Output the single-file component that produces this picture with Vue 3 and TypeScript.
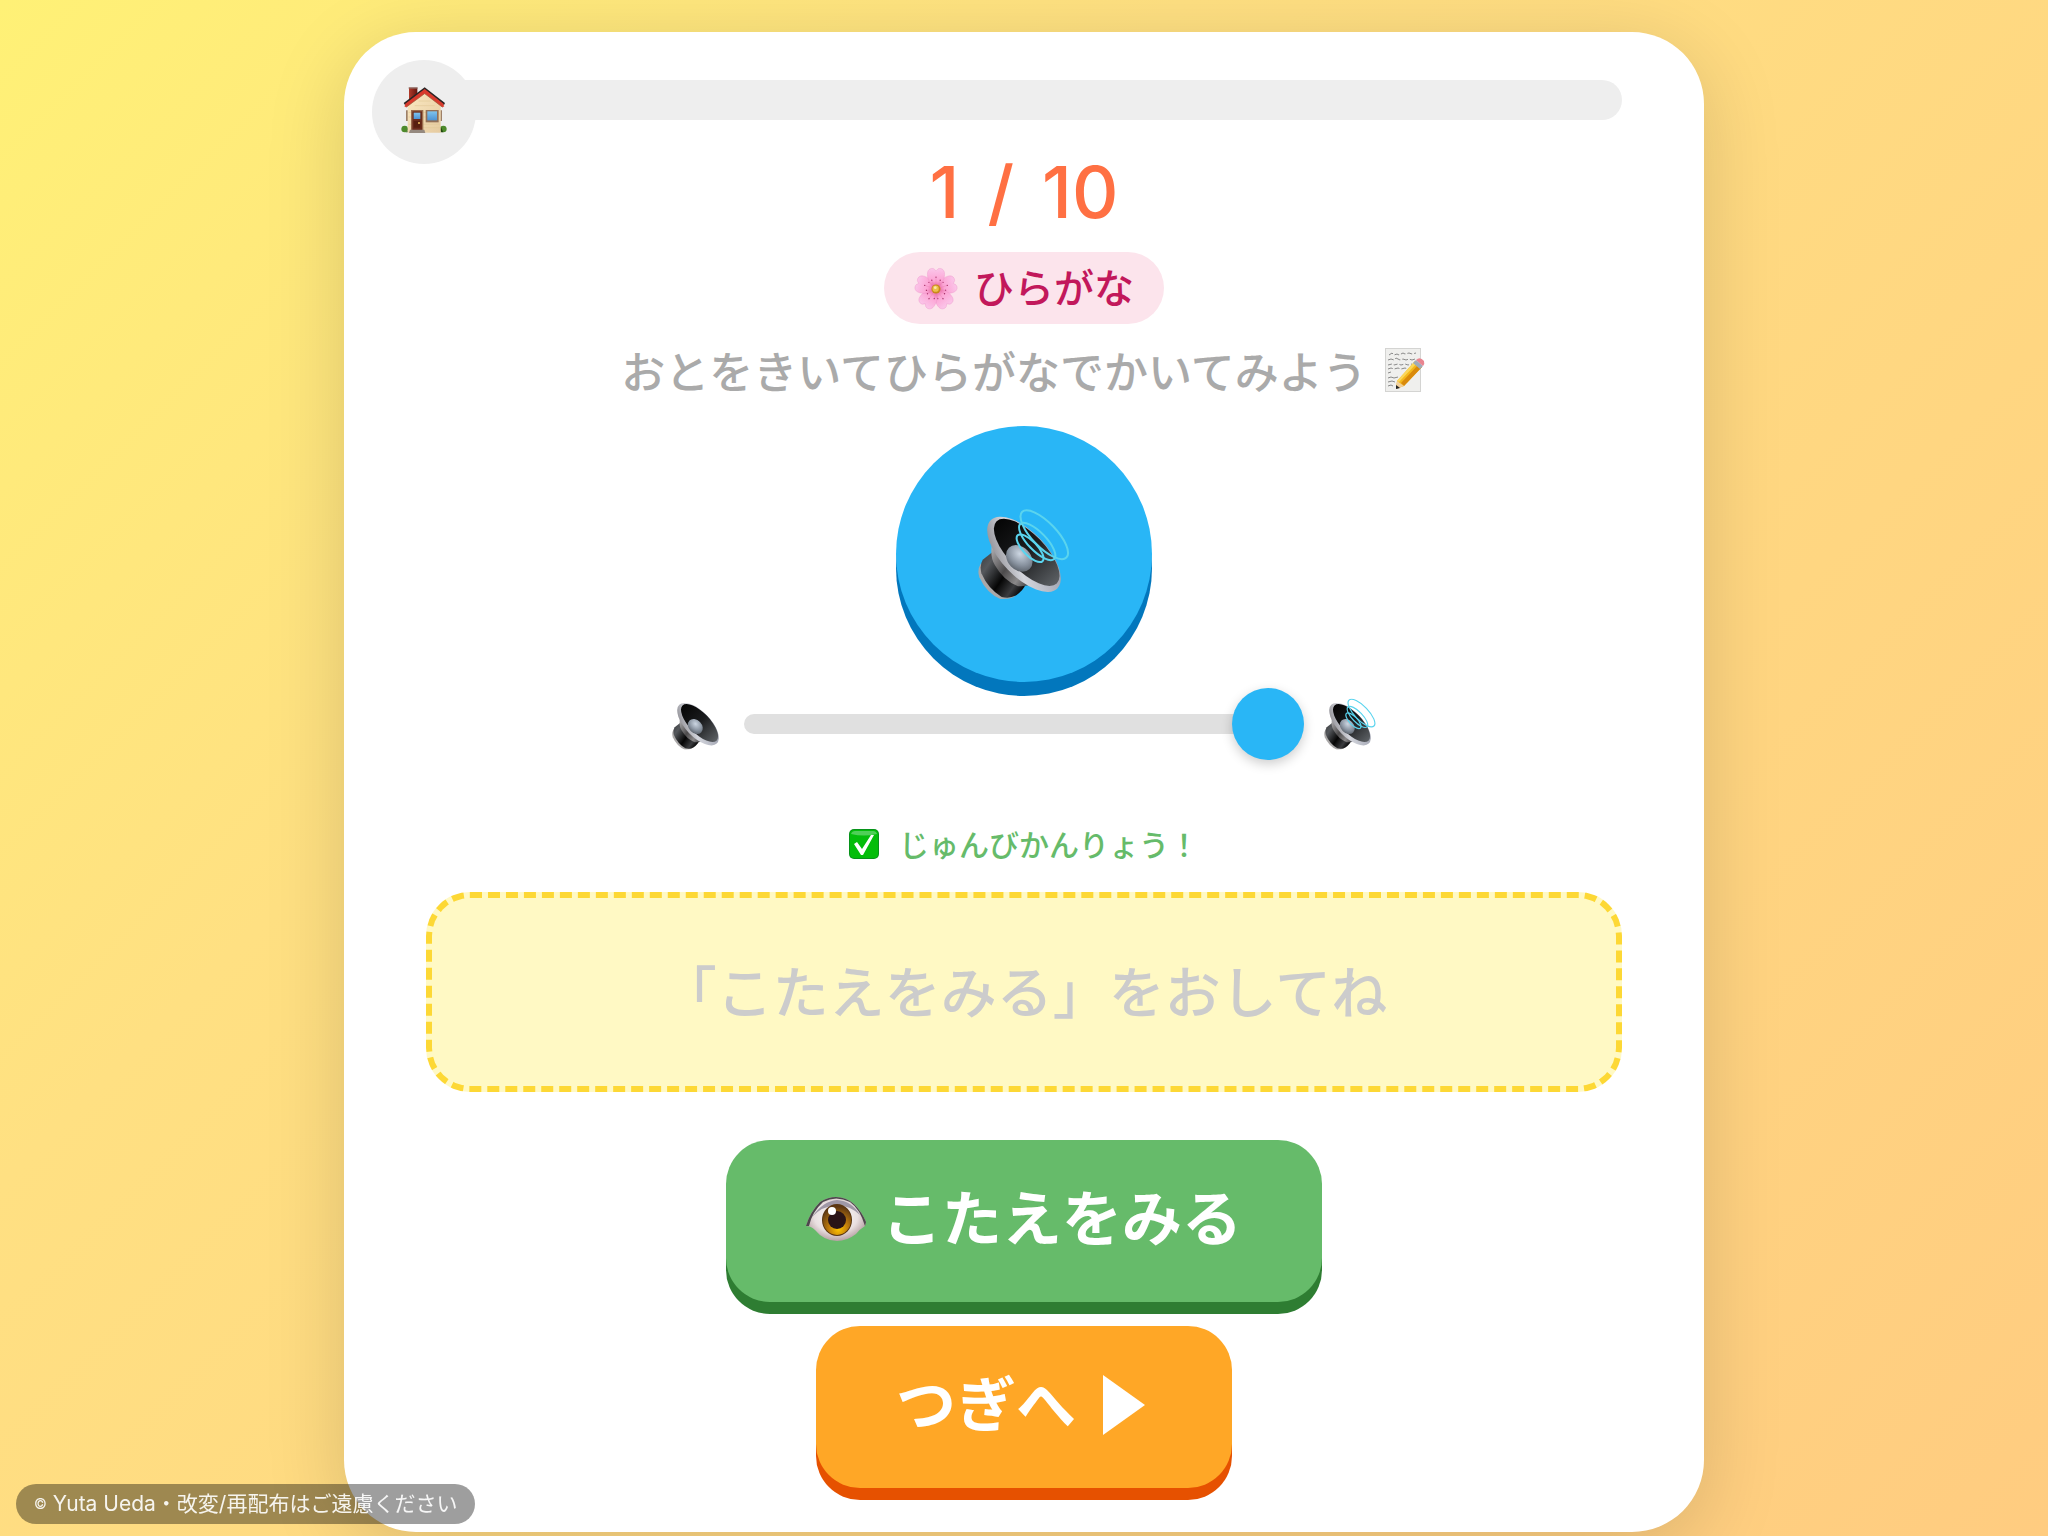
<script setup lang="ts">
import { computed, ref } from 'vue'

const total = 10
const current = ref(1)
const volume = ref(100)
const revealed = ref(false)
const answer = ref('さくら')

const answerText = computed(() => (revealed.value ? answer.value : '「こたえをみる」をおしてね'))
const progress = computed(() => `${((current.value - 1) / total) * 100}%`)

function next(): void {
  if (current.value < total) current.value += 1
  revealed.value = false
}
</script>

<template>
  <div class="page">
    <!-- Shared drawing definitions for the speaker icons -->
    <svg class="defs" aria-hidden="true">
      <defs>
        <linearGradient id="rim" x1="0" y1="1" x2="1" y2="0">
          <stop offset="0" stop-color="#77757a" />
          <stop offset="0.4" stop-color="#d3d5dc" />
          <stop offset="1" stop-color="#8f93a3" />
        </linearGradient>
        <linearGradient id="bowl" x1="0" y1="0" x2="1" y2="0">
          <stop offset="0" stop-color="#050505" />
          <stop offset="0.5" stop-color="#1b1c1e" />
          <stop offset="1" stop-color="#5c6064" />
        </linearGradient>
        <linearGradient id="base" x1="0" y1="0" x2="1" y2="0.7">
          <stop offset="0" stop-color="#3a3c3f" />
          <stop offset="0.25" stop-color="#55585c" />
          <stop offset="0.6" stop-color="#050505" />
          <stop offset="0.85" stop-color="#3a3b3e" />
          <stop offset="1" stop-color="#0c0c0d" />
        </linearGradient>
        <linearGradient id="neck" x1="0" y1="0" x2="1" y2="0.7">
          <stop offset="0" stop-color="#b9b8ba" />
          <stop offset="0.5" stop-color="#4c4a4b" />
          <stop offset="0.8" stop-color="#8a8889" />
          <stop offset="1" stop-color="#4b4b4e" />
        </linearGradient>
        <radialGradient id="dome" cx="0.4" cy="0.35" r="0.7">
          <stop offset="0" stop-color="#ccd6e2" />
          <stop offset="0.6" stop-color="#8a94a1" />
          <stop offset="1" stop-color="#5b626b" />
        </radialGradient>
        <symbol id="speaker" viewBox="0 0 272 270">
          <path d="M8 164 Q-3 182 4 204 Q26 252 66 268 Q90 270 106 262 L122 240 L30 160Z" fill="#aaa8a8" />
          <path d="M44 128 L14 152 Q4 168 10 192 Q30 238 70 262 Q92 268 112 258 Q136 240 140 226Z" fill="url(#base)" />
          <path d="M42 104 Q34 142 50 168 Q76 214 118 230 Q142 232 168 224Z" fill="url(#neck)" />
          <ellipse cx="136" cy="136" rx="141" ry="66" transform="rotate(46 136 136)" fill="url(#rim)" />
          <ellipse cx="144" cy="130" rx="128" ry="54" transform="rotate(46 144 130)" fill="url(#bowl)" />
          <ellipse cx="122" cy="148" rx="44" ry="34" transform="rotate(46 122 148)" fill="url(#dome)" />
        </symbol>
        <symbol id="waves" viewBox="0 0 272 270">
          <g fill="none" stroke="#5ad4ee" stroke-width="6">
            <ellipse cx="196" cy="78" rx="94" ry="36" transform="rotate(46 196 78)" />
            <ellipse cx="175" cy="98" rx="72" ry="27" transform="rotate(46 175 98)" />
            <ellipse cx="154" cy="118" rx="53" ry="21" transform="rotate(46 154 118)" />
          </g>
        </symbol>
      </defs>
    </svg>

    <main class="card">
      <button class="home" type="button" aria-label="ホーム">
        <svg viewBox="0 0 136 138" aria-hidden="true">
          <defs>
            <linearGradient id="wall" x1="0" y1="0" x2="1" y2="1">
              <stop offset="0" stop-color="#fbe9c2" />
              <stop offset="1" stop-color="#e6cba0" />
            </linearGradient>
            <linearGradient id="pane" x1="0" y1="0" x2="0" y2="1">
              <stop offset="0" stop-color="#7fc4ee" />
              <stop offset="1" stop-color="#4d93d4" />
            </linearGradient>
            <linearGradient id="chimney" x1="0" y1="0" x2="1" y2="0">
              <stop offset="0" stop-color="#b23a2a" />
              <stop offset="1" stop-color="#64150f" />
            </linearGradient>
          </defs>
          <path d="M23 2H48V28L23 46Z" fill="url(#chimney)" />
          <path d="M22 1H49V5H22Z" fill="#8c6a62" />
          <circle cx="10" cy="126" r="10" fill="#4d8a2c" />
          <circle cx="126" cy="126" r="10" fill="#4d8a2c" />
          <path d="M12 136A10 10 0 0 0 19 122V136ZM118 118V136H126Z" fill="#22480f" />
          <path d="M14 70H20V102H14ZM117 70H122V102H117Z" fill="#9d8068" />
          <path d="M19 50L70 12L118 50V137H19Z" fill="url(#wall)" />
          <path d="M22 76H30M66 76H74M22 90H30M66 90H74M22 112H30M66 112H116M66 122H116M40 56H100M52 42H88" stroke="#e3c998" stroke-width="2" />
          <path d="M70 11L125 52L129 58L124 61L70 20L14 61L9 58L13 52Z" fill="#df4030" />
          <path d="M70 1L131 48L128 54L70 9L11 54L7 48Z" fill="#2b2424" />
          <path d="M70 6L127 51L122 60L70 19L16 60L11 51Z" fill="#d93a2d" />
          <path d="M14 61L70 20L124 61" fill="none" stroke="#9b6d4a" stroke-width="2" />
          <path d="M29 69H66V130H29Z" fill="#9a6d4e" />
          <path d="M33 73H62V129H33Z" fill="#6b2c1b" />
          <path d="M37 77H57V96H37Z" fill="url(#pane)" />
          <path d="M37 102H57V122H37Z" fill="#57200f" />
          <circle cx="53" cy="108" r="3" fill="#f0c060" />
          <path d="M73 69H112V106H73Z" fill="#927058" />
          <path d="M78 73H107V100H78Z" fill="url(#pane)" />
          <path d="M26 128H69L72 138H23Z" fill="#95897f" />
        </svg>
      </button>

      <div class="progress" role="progressbar" :aria-valuenow="current" aria-valuemin="1" :aria-valuemax="total">
        <div class="progress-fill" :style="{ width: progress }"></div>
      </div>

      <p class="counter">
        <span>{{ current }}</span>
        <span>/</span>
        <span>{{ total }}</span>
      </p>

      <div class="badge">
        <svg class="flower" viewBox="0 0 126 126" aria-hidden="true">
          <defs>
            <linearGradient id="petal" x1="0" y1="0" x2="0" y2="1">
              <stop offset="0" stop-color="#fbc6ea" />
              <stop offset="0.6" stop-color="#fca4d4" />
              <stop offset="1" stop-color="#e0508f" />
            </linearGradient>
          </defs>
          <g v-for="n in 5" :key="n" :transform="`rotate(${n * 72} 63 66)`">
            <path
              d="M63 66C46 56 36 34 39 18C41 9 49 5 57 8L63 14L69 8C77 5 85 9 87 18C90 34 80 56 63 66Z"
              fill="url(#petal)"
              stroke="#e98fc4"
              stroke-width="1"
            />
            <path d="M63 60V34M58 58L51 42M68 58L75 42" stroke="#e77fb2" stroke-width="1" />
            <circle cx="63" cy="32" r="2" fill="#a8346a" />
            <circle cx="51" cy="41" r="2" fill="#a8346a" />
            <circle cx="75" cy="41" r="2" fill="#a8346a" />
          </g>
          <circle cx="63" cy="66" r="13" fill="#c9891c" />
          <circle cx="62" cy="65" r="9" fill="#edc04a" />
          <circle cx="61" cy="62" r="4" fill="#fbe9a4" />
        </svg>
        <span>ひらがな</span>
      </div>

      <p class="instruction">
        <span>おとをきいてひらがなでかいてみよう</span>
        <svg class="memo" viewBox="0 0 44 44" aria-hidden="true">
          <path d="M2 0H38V44H2Z" fill="#d4d4d2" />
          <path d="M3 1H37V43H3Z" fill="#efefed" />
          <g fill="none" stroke="#8a8a8a" stroke-width="1">
            <path d="M6 7l3-2 2 2 3-1 2 1 4-2 2 1 4-1 3 1 4-1" stroke-dasharray="5 2" />
            <path d="M5 12l3-1 3 1 2-2 4 2 3-1 3 1 3-1 3 1 3-1" stroke-dasharray="6 2" />
            <path d="M5 17l4-1 2 1 4-1 3 1 4-1 3 1 4-1" stroke-dasharray="4 2" />
            <path d="M5 21l3-1 3 1 4-1 3 1 4-1 3 1" stroke-dasharray="5 2" />
            <path d="M5 25l3-1M5 30l3-1 3 1 4-1M5 34l4-1 3 1M5 38l3-1 2 1" />
          </g>
          <path d="M13 41L14 33L32 13L39 19L21 38Z" fill="#f4b81c" />
          <path d="M18 35L36 16L39 19L21 38Z" fill="#d98a0b" />
          <path d="M14 33L32 13L34 15L16 34Z" fill="#fbd75a" />
          <path d="M13 41L14 33L21 38Z" fill="#f1cf9a" />
          <path d="M13 41L13 37L17 40Z" fill="#222" />
          <path d="M30 15L33 12L40 18L37 21Z" fill="#9eabba" />
          <path d="M33 12Q37 8 41 13Q42 16 40 18Z" fill="#e98590" />
        </svg>
      </p>

      <button class="play" type="button" aria-label="おとをきく">
        <svg viewBox="0 0 272 270" aria-hidden="true">
          <use href="#speaker" />
          <use href="#waves" />
        </svg>
      </button>

      <div class="volume">
        <svg viewBox="0 0 272 270" aria-hidden="true"><use href="#speaker" /></svg>
        <input v-model.number="volume" type="range" min="0" max="100" aria-label="おんりょう" />
        <svg viewBox="0 0 272 270" aria-hidden="true">
          <use href="#speaker" />
          <use href="#waves" />
        </svg>
      </div>

      <p class="status">
        <svg viewBox="0 0 30 30" aria-hidden="true">
          <rect width="30" height="30" rx="5" fill="#07931a" />
          <rect x="1" y="1" width="28" height="28" rx="4" fill="#04bd0b" />
          <path d="M2 5Q3 2 6 2H24Q27 2 28 5Q15 8 2 5Z" fill="#4fcf58" />
          <path d="M5 15L8 13L13 20L22 6H25L14 26H12Z" fill="#fff" />
        </svg>
        <span>じゅんびかんりょう！</span>
      </p>

      <div class="answer" aria-live="polite">{{ answerText }}</div>

      <button class="action reveal" type="button" @click="revealed = true">
        <svg class="glyph" viewBox="0 0 60 60" aria-hidden="true">
          <defs>
            <radialGradient id="white" cx="0.5" cy="0.45" r="0.6">
              <stop offset="0" stop-color="#ffffff" />
              <stop offset="0.6" stop-color="#e9dfe0" />
              <stop offset="1" stop-color="#a88f92" />
            </radialGradient>
            <radialGradient id="iris" cx="0.55" cy="0.8" r="0.75">
              <stop offset="0" stop-color="#ffc400" />
              <stop offset="0.45" stop-color="#c07c0c" />
              <stop offset="1" stop-color="#5c3612" />
            </radialGradient>
          </defs>
          <path d="M0 35Q4 21 14 11Q22 6 30 6Q40 6 48 13Q56 21 60 31L59 35Q54 38 50 43Q41 50 31 50Q18 50 9 39Q5 35 0 35Z" fill="url(#white)" />
          <path d="M0 35Q4 21 14 11Q22 6 30 6Q40 6 48 13Q56 21 60 31L59 35Q54 18 44 11Q30 4 17 11Q6 21 3 35Z" fill="#4d474c" />
          <path d="M6 26Q17 10 31 9Q46 10 54 24Q45 15 31 14Q16 15 6 26Z" fill="#9f97a6" />
          <ellipse cx="31" cy="29" rx="15" ry="16" fill="#5b3610" />
          <ellipse cx="31" cy="29" rx="14" ry="15" fill="url(#iris)" />
          <ellipse cx="31" cy="29" rx="9" ry="9" fill="#2a1416" />
          <ellipse cx="26" cy="20" rx="4" ry="4" fill="#fff" />
        </svg>
        <span>こたえをみる</span>
      </button>

      <button class="action next" type="button" @click="next">
        <span>つぎへ</span>
        <svg class="glyph" viewBox="0 0 60 60" aria-hidden="true">
          <path d="M11 -2L53 28L11 58Z" fill="#fff" />
        </svg>
      </button>
    </main>

    <footer class="notice">
      <span class="mark">©</span>
      <span>Yuta Ueda・改変/再配布はご遠慮ください</span>
    </footer>
  </div>
</template>

<style>
body {
  margin: 0;
}
</style>

<style scoped>
.page {
  box-sizing: border-box;
  min-height: 100vh;
  padding: 32px 16px 4px;
  background: linear-gradient(135deg, #fff176, #ffe082 33%, #ffcc80);
  font-family: 'Noto Sans CJK JP', sans-serif;
}

.page button {
  border: 0;
  padding: 0;
  font-family: inherit;
  cursor: pointer;
}

.defs {
  position: absolute;
  width: 0;
  height: 0;
}

.card {
  position: relative;
  box-sizing: border-box;
  display: flex;
  flex-direction: column;
  align-items: center;
  max-width: 1360px;
  margin: 0 auto;
  padding: 48px 82px 44px;
  border-radius: 72px;
  background: #fff;
  box-shadow: 0 16px 80px rgba(0, 0, 0, 0.15);
}

.page .home {
  position: absolute;
  top: 28px;
  left: 28px;
  display: grid;
  place-items: center;
  width: 104px;
  height: 104px;
  border-radius: 50%;
  background: #eee;
}

.home svg {
  width: 46px;
  height: 46px;
  padding-bottom: 4px;
}

.progress {
  width: 100%;
  height: 40px;
  overflow: hidden;
  border-radius: 20px;
  background: #eee;
}

.progress-fill {
  height: 100%;
  background: #ff7043;
}

.counter {
  display: flex;
  gap: 28px;
  margin: 26px 0 14px;
  color: #ff7043;
  font-family: Inter, sans-serif;
  font-size: 72px;
  font-weight: 500;
  line-height: 92px;
}

.badge {
  display: flex;
  align-items: center;
  gap: 16px;
  padding: 0 30px;
  border-radius: 36px;
  background: #fce4ec;
  color: #c2185b;
  font-size: 40px;
  font-weight: 500;
  line-height: 68px;
}

.badge span {
  padding-bottom: 4px;
}

.flower,
.memo {
  width: 44px;
  height: 44px;
}

.instruction {
  display: flex;
  align-items: center;
  gap: 16px;
  margin: 12px 0 22px;
  color: #aaa;
  font-size: 44px;
  font-weight: 500;
  line-height: 68px;
}

.page .play {
  display: grid;
  place-items: center;
  width: 256px;
  height: 256px;
  border-radius: 50%;
  background: #29b6f6;
  box-shadow: 0 14px 0 #0277bd;
}

.play svg {
  width: 92px;
  height: 92px;
}

.volume {
  display: flex;
  align-items: center;
  gap: 20px;
  margin-top: 6px;
}

.volume svg {
  width: 52px;
  height: 52px;
}

.volume input {
  width: 560px;
  height: 72px;
  margin: 0;
  background: transparent;
  appearance: none;
}

.volume input::-webkit-slider-runnable-track {
  height: 20px;
  border-radius: 10px;
  background: #e0e0e0;
}

.volume input::-webkit-slider-thumb {
  width: 72px;
  height: 72px;
  margin-top: -26px;
  border-radius: 50%;
  background: #29b6f6;
  box-shadow: 0 4px 12px rgba(0, 0, 0, 0.2);
  appearance: none;
}

.status {
  display: flex;
  align-items: center;
  gap: 20px;
  margin: 64px 0 28px;
  color: #66bb6a;
  font-size: 30px;
  font-weight: 500;
  line-height: 38px;
}

.status span {
  padding-bottom: 2px;
}

.status svg {
  width: 30px;
  height: 30px;
}

.answer {
  box-sizing: border-box;
  display: grid;
  place-items: center;
  width: 100%;
  min-height: 200px;
  padding-bottom: 6px;
  border: 6px dashed #fdd835;
  border-radius: 44px;
  background: #fff9c4;
  color: #ccc;
  font-size: 56px;
  font-weight: 500;
  line-height: 80px;
}

.page .action {
  display: flex;
  align-items: center;
  gap: 16px;
  padding: 36px 80px;
  border-radius: 44px;
  color: #fff;
  font-size: 60px;
  font-weight: 700;
  line-height: 78px;
}

.action span {
  padding-bottom: 12px;
}

.glyph {
  width: 60px;
  height: 60px;
  overflow: visible;
}

.page .reveal {
  margin-top: 48px;
  background: #66bb6a;
  box-shadow: 0 12px 0 #2e7d32;
}

.page .next {
  margin-top: 24px;
  background: #ffa726;
  box-shadow: 0 12px 0 #e65100;
}

.notice {
  position: fixed;
  bottom: 12px;
  left: 16px;
  display: flex;
  align-items: center;
  gap: 6px;
  padding: 0 18px;
  border-radius: 20px;
  background: rgba(0, 0, 0, 0.38);
  color: rgba(255, 255, 255, 0.9);
  font-family: Inter, 'Noto Sans CJK JP', sans-serif;
  font-size: 21px;
  line-height: 40px;
}

.mark {
  font-size: 14px;
}
</style>
